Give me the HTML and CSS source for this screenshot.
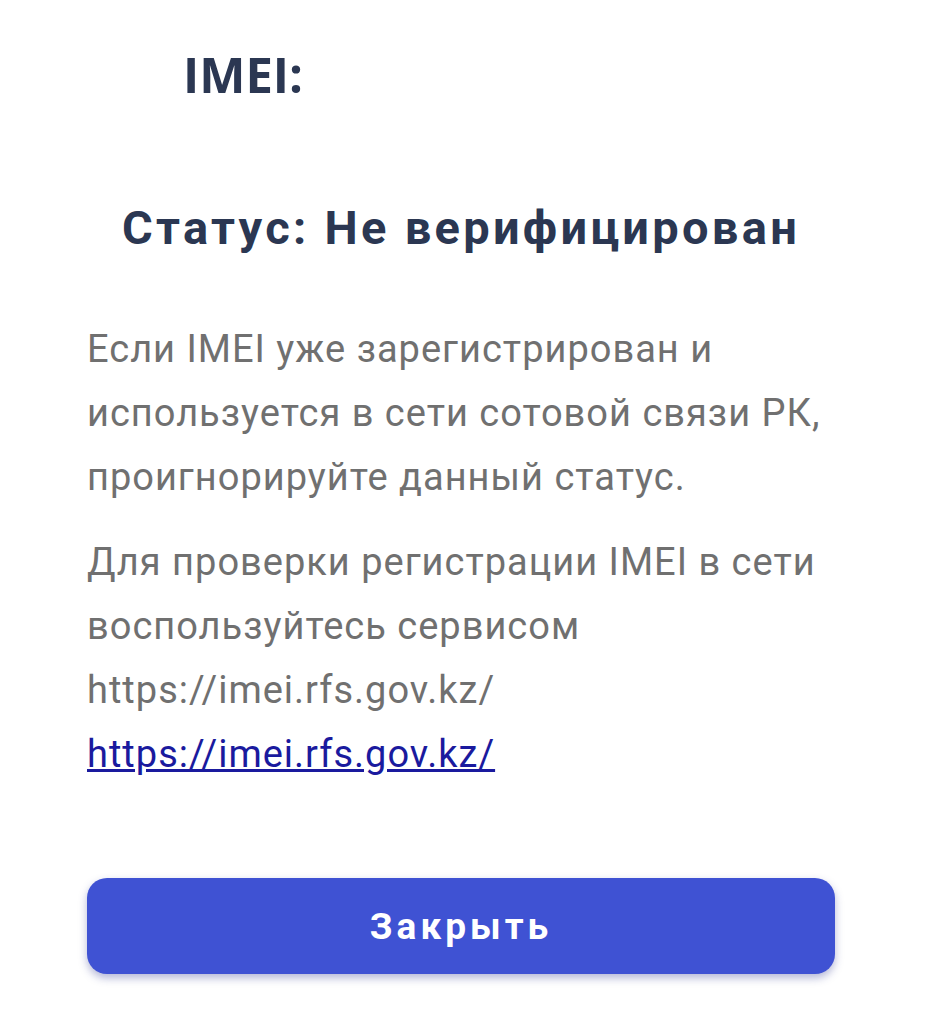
FILE: index.html
```html
<!DOCTYPE html>
<html>
<head>
    <title>IMEI</title>
    <meta name="viewport" content="width=device-width, initial-scale=1.0">
    <link rel="stylesheet" href="styles.css">
</head>
<body>
    <div class="sheet">
        <!-- IMEI number (hidden in the screenshot) -->
        <div class="imei">IMEI: <span class="imei-num"></span></div>

        <h2 class="status">Статус: Не верифицирован</h2>

        <p class="note">Если IMEI уже зарегистрирован и используется в сети сотовой связи РК, проигнорируйте данный статус.</p>

        <p class="note">Для проверки регистрации IMEI в сети воспользуйтесь сервисом https://imei.rfs.gov.kz/
            <br><a href="https://imei.rfs.gov.kz/">https://imei.rfs.gov.kz/</a>
        </p>

        <button type="button" class="close-btn">Закрыть</button>
    </div>
</body>
</html>
```

FILE: styles.css
```css
* {
    box-sizing: border-box;
    margin: 0;
    padding: 0;
}

body {
    font-family: Roboto, "Liberation Sans", sans-serif;
    background: #fff;
    color: #333;
}

.sheet {
    padding: 41px 91px 40px 87px;
    display: flex;
    flex-direction: column;
}

.imei {
    font-family: "Open Sans", "Liberation Sans", sans-serif;
    font-weight: 700;
    font-size: 49px;
    color: #2b3752;
    margin-left: 96px;
}

.status {
    font-size: 47px;
    font-weight: 700;
    letter-spacing: 3.3px;
    color: #2b3752;
    text-align: center;
    margin-top: 93px;
}

.note {
    font-size: 38px;
    line-height: 64px;
    letter-spacing: 1px;
    color: #707070;
}
.status + .note {
    margin-top: 62px;
}
.note + .note {
    margin-top: 21px;
}
.note a {
    color: #1a1a9e;
}

/* Close button */
.close-btn {
    margin-top: 92px;
    height: 96px;
    border: none;
    border-radius: 20px;
    background-color: #3f52d3;
    color: #fff;
    font-family: Roboto, "Liberation Sans", sans-serif;
    font-size: 37px;
    font-weight: 700;
    letter-spacing: 4px;
    box-shadow: 0 4px 8px rgba(40, 50, 140, 0.35);
    cursor: pointer;
}
```
